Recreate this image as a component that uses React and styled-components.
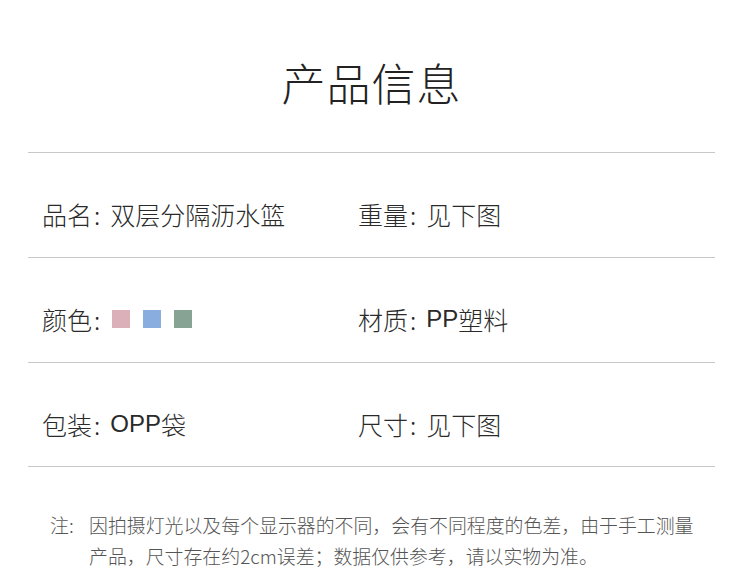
import React from "react";
import styled, { createGlobalStyle } from "styled-components";

const Global = createGlobalStyle`
  html, body { margin: 0; padding: 0; background: #fff; }
  body { font-family: "Noto Sans CJK SC", "Noto Sans", sans-serif; }
`;

const Page = styled.div`
  width: 750px;
  height: 578px;
  overflow: hidden;
  background: #fff;
  box-sizing: border-box;
  padding: 0 35px 0 28px;
`;

const Header = styled.div`
  height: 152px;
  box-sizing: border-box;
  padding-top: 52px;
  display: flex;
  justify-content: center;
`;

const Title = styled.h1`
  margin: 0;
  font-size: 44px;
  line-height: 60px;
  font-weight: 200;
  color: #222;
  letter-spacing: 1px;
`;

const Row = styled.div`
  display: grid;
  grid-template-columns: 316px 1fr;
  height: 105px;
  box-sizing: border-box;
  padding: 38px 0 0 14px;
  border-top: 1px solid #c8c8c8;
  ${(p) => p.$last && "border-bottom: 1px solid #c8c8c8;"}
`;

const Cell = styled.div`
  display: flex;
  align-items: center;
  height: 46px;
  font-size: 25px;
  font-weight: 300;
  color: #2a2a2a;
  white-space: nowrap;
`;

const Colon = styled.span`
  padding: 0 10px 0 2px;
`;

const Latin = styled.span`
  font-family: "Liberation Sans", Arial, sans-serif;
  font-size: 24px;
`;

const Swatches = styled.div`
  display: flex;
  gap: 13px;
  margin-left: 2px;
`;

const Swatch = styled.span`
  display: block;
  width: 18px;
  height: 18px;
  background: ${(p) => p.$color};
`;

const Note = styled.div`
  display: flex;
  margin-top: 42px;
  padding-left: 22px;
  font-size: 18.9px;
  line-height: 31px;
  font-weight: 300;
  color: #555;
`;

const NoteLabel = styled.span`
  flex: 0 0 39px;
`;

const NoteText = styled.p`
  margin: 0;
  width: 612px;
`;

const Field = ({ label, children }) => (
  <Cell>
    {label}
    <Colon>:</Colon>
    {children}
  </Cell>
);

export default function App() {
  return (
    <>
      <Global />
      <Page>
        <Header>
          <Title>产品信息</Title>
        </Header>
        <Row>
          <Field label="品名">双层分隔沥水篮</Field>
          <Field label="重量">见下图</Field>
        </Row>
        <Row>
          <Field label="颜色">
            <Swatches>
              <Swatch $color="#dcb0b8" />
              <Swatch $color="#8aaddf" />
              <Swatch $color="#86a393" />
            </Swatches>
          </Field>
          <Field label="材质">
            <Latin>PP</Latin>塑料
          </Field>
        </Row>
        <Row $last>
          <Field label="包装">
            <Latin>OPP</Latin>袋
          </Field>
          <Field label="尺寸">见下图</Field>
        </Row>
        <Note>
          <NoteLabel>注:</NoteLabel>
          <NoteText>
            因拍摄灯光以及每个显示器的不同，会有不同程度的色差，由于手工测量产品，尺寸存在约2cm误差；数据仅供参考，请以实物为准。
          </NoteText>
        </Note>
      </Page>
    </>
  );
}
